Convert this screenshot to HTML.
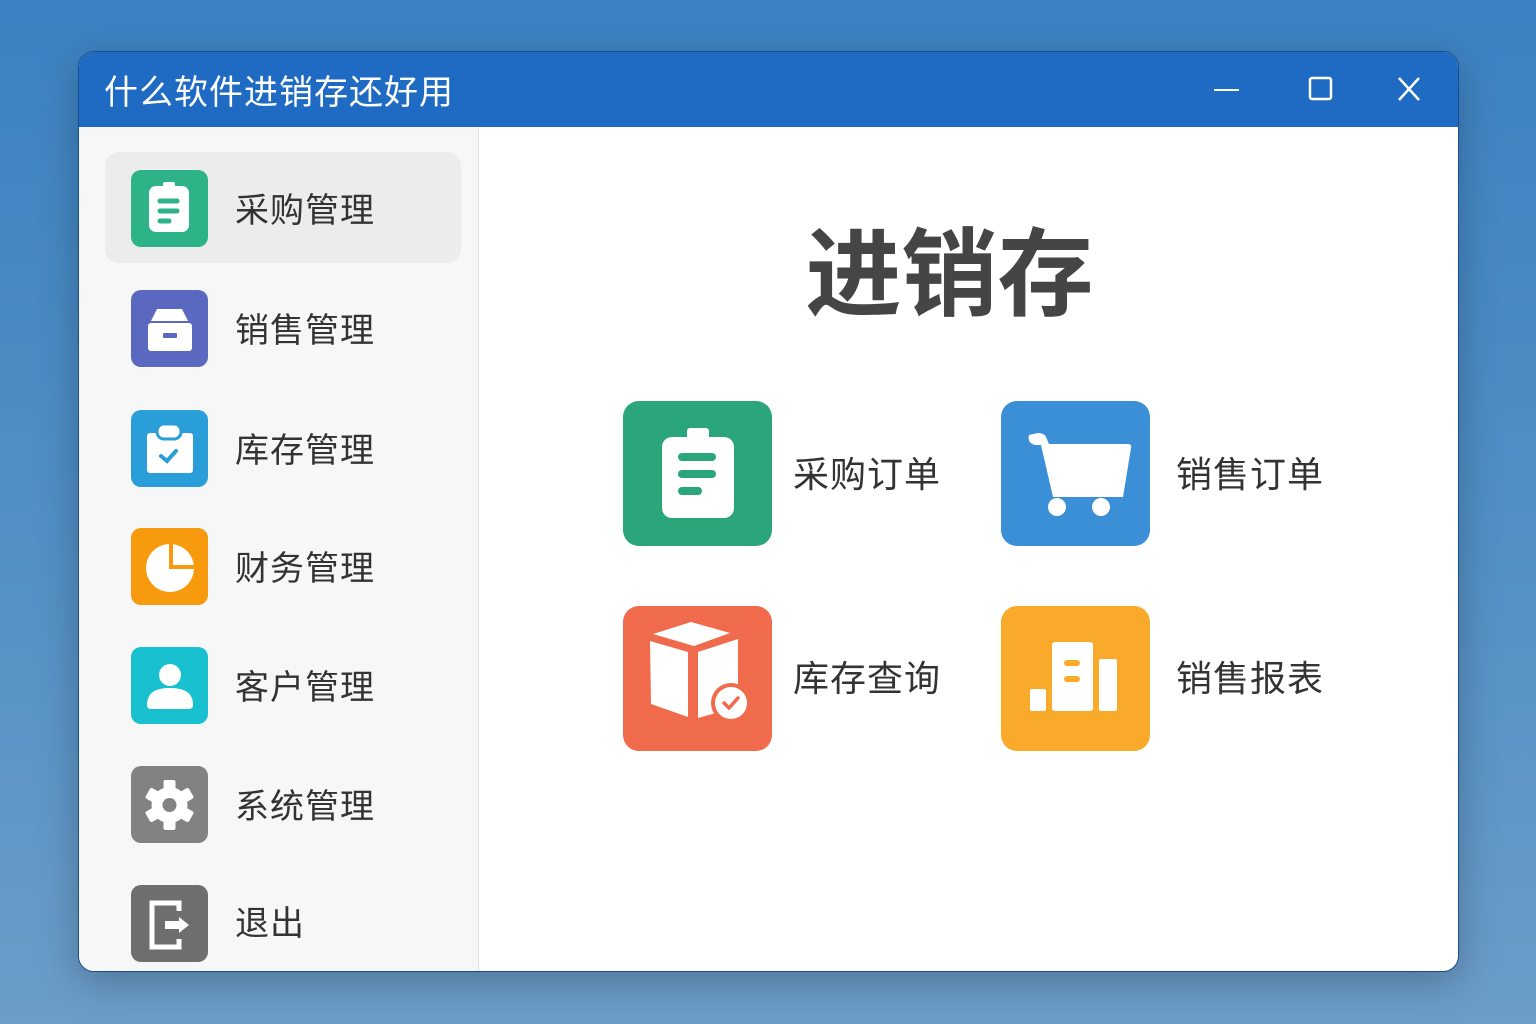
<!DOCTYPE html>
<html><head><meta charset="utf-8"><style>
*{margin:0;padding:0;box-sizing:border-box}
body{width:1536px;height:1024px;overflow:hidden;background:linear-gradient(180deg,#3b82c2 0%,#5390c6 55%,#6c9dc8 100%);font-family:"Liberation Sans","Noto Sans CJK SC",sans-serif;position:relative}
.win{position:absolute;left:78px;top:51px;width:1381px;height:921px;border-radius:16px;overflow:hidden;background:#fff;box-shadow:0 10px 40px rgba(0,0,0,.25);border:1px solid #1a4e8e}
.tb{position:absolute;left:0;top:0;width:100%;height:75px;background:#1f6ac2}
.tt{position:absolute;left:25px;top:13px;color:#fff;font-size:34px;letter-spacing:1px}
.side{position:absolute;left:0;top:75px;width:400px;bottom:0;background:#f7f7f7;border-right:1px solid #e0e0e0}
.sel{position:absolute;left:26px;top:25px;width:356px;height:111px;background:#ececec;border-radius:14px}
.it{position:absolute;left:52px;width:400px;height:78px}
.ic{position:absolute;left:0;top:0;width:77px;height:77px;border-radius:10px}
.it span{position:absolute;left:104px;top:13px;font-size:34px;color:#333;letter-spacing:1px}
.h{position:absolute;left:380px;width:981px;top:145px;text-align:center;font-size:96px;font-weight:bold;color:#454545;letter-spacing:0}
.tile{position:absolute;width:149px;height:145px;border-radius:16px}
.lb{position:absolute;font-size:36px;color:#333;letter-spacing:1px}
</style></head><body>
<div class="win">
<div class="tb"><div class="tt">什么软件进销存还好用</div>
<svg style="position:absolute;left:1120px;top:20px" width="250" height="40">
<line x1="15" y1="18" x2="40" y2="18" stroke="#fff" stroke-width="2"/>
<rect x="111" y="6" width="21" height="21" rx="2" fill="none" stroke="#fff" stroke-width="2.5"/>
<path d="M200 6L220 28M220 6L200 28" stroke="#fff" stroke-width="2.5"/>
</svg></div>
<div class="side">
<div class="sel"></div>
<div class="it" style="top:43px"><div class="ic" style="background:#2eb389"><svg width="77" height="77"><rect x="18" y="16" width="40" height="46" rx="7" fill="#fff"/><rect x="32" y="12" width="12" height="8" rx="2" fill="#fff"/><g stroke="#2eb389" stroke-width="5" stroke-linecap="round"><line x1="29" y1="31" x2="46" y2="31"/><line x1="29" y1="41" x2="46" y2="41"/><line x1="29" y1="51" x2="38" y2="51"/></g></svg></div><span>采购管理</span></div>
<div class="it" style="top:163px"><div class="ic" style="background:#5a69bf"><svg width="77" height="77"><path d="M20 31L26 19H51L57 31Z" fill="#fff"/><rect x="17" y="33" width="44" height="28" rx="3" fill="#fff"/><rect x="32" y="43" width="14" height="5" rx="1" fill="#5a69bf"/></svg></div><span>销售管理</span></div>
<div class="it" style="top:283px"><div class="ic" style="background:#2a9ed8"><svg width="77" height="77"><rect x="16" y="23" width="46" height="40" rx="3" fill="#fff"/><rect x="26" y="14" width="24" height="15" rx="7" fill="#fff" stroke="#2a9ed8" stroke-width="3"/><path d="M30 46L36 51L45 41" stroke="#2a9ed8" stroke-width="4" fill="none" stroke-linecap="round"/></svg></div><span>库存管理</span></div>
<div class="it" style="top:401px"><div class="ic" style="background:#f89a0e"><svg width="77" height="77"><circle cx="39" cy="40" r="24" fill="#fff"/><path d="M40 16V39H63" stroke="#f89a0e" stroke-width="4" fill="none"/><path d="M42 17A23 23 0 0 1 62 37H42Z" fill="#fff"/></svg></div><span>财务管理</span></div>
<div class="it" style="top:520px"><div class="ic" style="background:#19c0cf"><svg width="77" height="77"><circle cx="39" cy="28" r="11" fill="#fff"/><path d="M16 58C16 44 27 41 39 41S62 44 62 58Q62 62 58 62H20Q16 62 16 58Z" fill="#fff"/></svg></div><span>客户管理</span></div>
<div class="it" style="top:639px"><div class="ic" style="background:#828282"><svg width="77" height="77"><g fill="#fff" transform="translate(38.5 39)"><circle r="18"/><g id="t"><rect x="-6" y="-25" width="12" height="12" rx="2"/></g><use href="#t" transform="rotate(60)"/><use href="#t" transform="rotate(120)"/><use href="#t" transform="rotate(180)"/><use href="#t" transform="rotate(240)"/><use href="#t" transform="rotate(300)"/></g><circle cx="38.5" cy="39" r="7" fill="#828282"/></svg></div><span>系统管理</span></div>
<div class="it" style="top:758px"><div class="ic" style="background:#6e6e6e"><svg width="77" height="77"><path d="M48 26V18H21V62H48V54" stroke="#fff" stroke-width="5" fill="none"/><path d="M34 36H48V32L58 40L48 48V44H34Z" fill="#fff"/></svg></div><span style="top:11px">退出</span></div>
</div>
<div class="h">进销存</div>
<div class="tile" style="left:544px;top:349px;background:#2ba57a"><svg width="149" height="145"><rect x="39" y="36" width="72" height="81" rx="10" fill="#fff"/><rect x="64" y="27" width="22" height="12" rx="3" fill="#fff"/><g stroke="#2ba57a" stroke-width="8" stroke-linecap="round"><line x1="59" y1="56" x2="89" y2="56"/><line x1="59" y1="73" x2="89" y2="73"/><line x1="59" y1="90" x2="75" y2="90"/></g></svg></div>
<div class="lb" style="left:714px;top:394px">采购订单</div>
<div class="tile" style="left:922px;top:349px;background:#3a8fd6"><svg width="149" height="145"><path d="M28 34Q26 42 34 44H40L52 96H122L130 47Q131 43 127 43H48L45 36Q43 32 37 32Z" fill="#fff"/><circle cx="56" cy="106" r="9" fill="#fff"/><circle cx="100" cy="106" r="9" fill="#fff"/></svg></div>
<div class="lb" style="left:1097px;top:394px">销售订单</div>
<div class="tile" style="left:544px;top:554px;background:#f06b4c"><svg width="149" height="145"><path d="M30 28L68 16L107 27L71 40Z" fill="#fff"/><path d="M27 35L65 46V111L28 98Z" fill="#fff"/><path d="M75 46L115 33V80L100 92V105L75 112Z" fill="#fff"/><circle cx="108" cy="97" r="20" fill="#f06b4c"/><circle cx="108" cy="97" r="16" fill="#fff"/><path d="M101 97L106 102L115 92" stroke="#f06b4c" stroke-width="3.5" fill="none" stroke-linecap="round"/></svg></div>
<div class="lb" style="left:714px;top:598px">库存查询</div>
<div class="tile" style="left:922px;top:554px;background:#f9aa2b"><svg width="149" height="145"><rect x="29" y="83" width="16" height="22" rx="2" fill="#fff"/><rect x="51" y="36" width="41" height="69" rx="3" fill="#fff"/><rect x="98" y="53" width="18" height="52" rx="2" fill="#fff"/><g stroke="#f9aa2b" stroke-width="6" stroke-linecap="round"><line x1="66" y1="57" x2="76" y2="57"/><line x1="66" y1="73" x2="76" y2="73"/></g></svg></div>
<div class="lb" style="left:1097px;top:598px">销售报表</div>
</div>
</body></html>
